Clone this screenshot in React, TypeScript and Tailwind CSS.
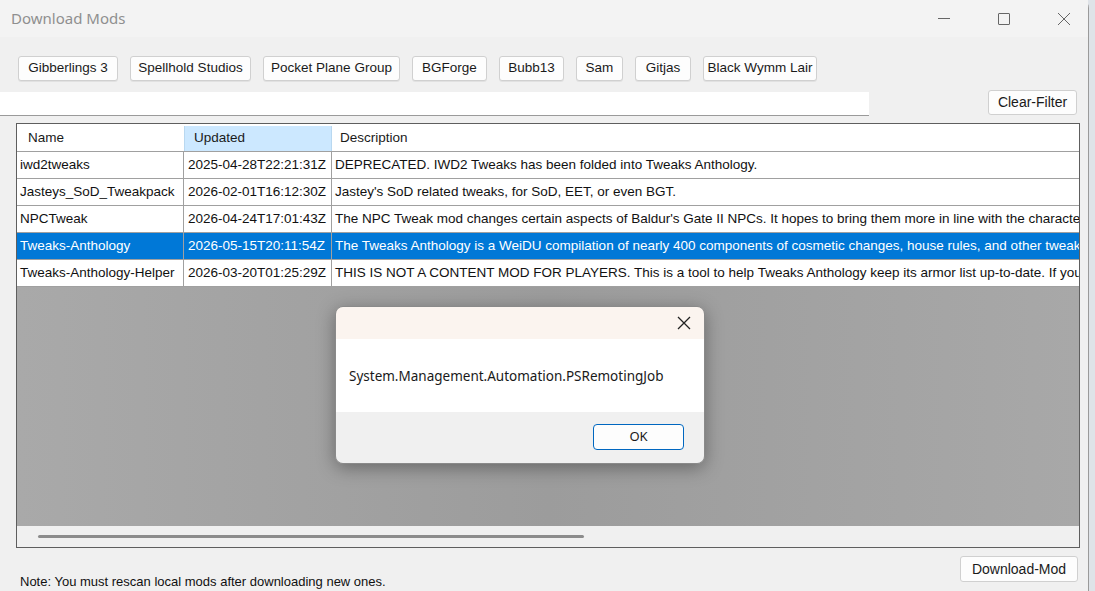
import React from "react";

const sources = [
  { label: "Gibberlings 3", w: "w-[100px]" },
  { label: "Spellhold Studios", w: "w-[121px]" },
  { label: "Pocket Plane Group", w: "w-[137px]" },
  { label: "BGForge", w: "w-[75px]" },
  { label: "Bubb13", w: "w-[65px]" },
  { label: "Sam", w: "w-[47px]" },
  { label: "Gitjas", w: "w-[56px]" },
  { label: "Black Wymm Lair", w: "w-[114px]" },
];

const rows = [
  ["iwd2tweaks", "2025-04-28T22:21:31Z", "DEPRECATED. IWD2 Tweaks has been folded into Tweaks Anthology."],
  ["Jasteys_SoD_Tweakpack", "2026-02-01T16:12:30Z", "Jastey's SoD related tweaks, for SoD, EET, or even BGT."],
  ["NPCTweak", "2026-04-24T17:01:43Z", "The NPC Tweak mod changes certain aspects of Baldur's Gate II NPCs. It hopes to bring them more in line with the character as they were presented in Baldur's Gate."],
  ["Tweaks-Anthology", "2026-05-15T20:11:54Z", "The Tweaks Anthology is a WeiDU compilation of nearly 400 components of cosmetic changes, house rules, and other tweaks for Infinity Engine games."],
  ["Tweaks-Anthology-Helper", "2026-03-20T01:25:29Z", "THIS IS NOT A CONTENT MOD FOR PLAYERS. This is a tool to help Tweaks Anthology keep its armor list up-to-date. If you are a modder"],
];

const ui = { fontFamily: '"Liberation Sans", Arial, sans-serif' };
const seg = { fontFamily: '"Noto Sans", "Open Sans", sans-serif' };

export default function App() {
  return (
    <div className="w-[1095px] h-[591px] bg-[#dfe3e8] overflow-hidden relative" style={ui}>
      <div className="w-[1089px] h-[591px] bg-[#f0f0f0] rounded-tr-[8px] border-r border-[#9a9a9a] flex flex-col relative">
        {/* Title bar */}
        <div className="h-[37px] bg-[#f3f3f3] flex items-center justify-between shrink-0">
          <span className="pl-[11px] text-[15px] text-[#8f8f8f]" style={seg}>Download Mods</span>
          <div className="flex items-center h-full">
            <div className="w-[60px] flex justify-center">
              <div className="w-[12px] h-px bg-[#666]" />
            </div>
            <div className="w-[60px] mr-[6px] flex justify-center">
              <div className="w-[12px] h-[12px] border border-[#666] rounded-[1px]" />
            </div>
            <div className="w-[48px] flex justify-center">
              <svg width="14" height="14" viewBox="0 0 14 14">
                <path d="M1 1L13 13M13 1L1 13" stroke="#666" strokeWidth="1" />
              </svg>
            </div>
          </div>
        </div>

        {/* Source buttons */}
        <div className="flex gap-[12px] pl-[18px] mt-[19px] shrink-0">
          {sources.map((s) => (
            <div
              key={s.label}
              className={`${s.w} h-[25px] shrink-0 whitespace-nowrap bg-[#fdfdfd] border border-[#d0d0d0] rounded-[3px] shadow-[0_1px_0_rgba(0,0,0,0.06)] flex items-center justify-center text-[13.5px] text-[#1a1a1a]`}
            >
              {s.label}
            </div>
          ))}
        </div>

        {/* Filter row */}
        <div className="flex items-start mt-[9px] shrink-0 h-[33px]">
          <div className="w-[869px] h-[24px] mt-[2px] bg-white border-b border-[#9a9a9a]" />
          <div className="ml-[119px] w-[89px] h-[25px] bg-[#fdfdfd] border border-[#d0d0d0] rounded-[3px] flex items-center justify-center text-[14px] text-[#1a1a1a]">
            Clear-Filter
          </div>
        </div>

        {/* List view */}
        <div className="ml-[16px] w-[1064px] h-[425px] border border-[#5e5e5e] bg-[#aaaaaa] flex flex-col shrink-0 overflow-hidden">
          <div className="bg-white h-[2px] shrink-0" />
          <div className="flex h-[25px] bg-white text-[13.5px] text-[#1a1a1a] shrink-0 pl-[1px]">
            <div className="w-[166px] pl-[10px] flex items-center">Name</div>
            <div className="w-[148px] pl-[9px] flex items-center bg-[#cce8ff] border-l border-r border-[#b9d8f0]">Updated</div>
            <div className="flex-1 pl-[8px] flex items-center">Description</div>
          </div>
          {rows.map((r, i) => {
            const sel = i === 3;
            return (
              <div
                key={r[0]}
                className={`flex h-[27px] text-[13.5px] shrink-0 border-t border-[#a0a0a0] ${sel ? "bg-[#0078d7] text-white" : "bg-white text-[#111]"}`}
              >
                <div className="w-[167px] pl-[3px] flex items-center whitespace-nowrap overflow-hidden border-r border-[#a0a0a0]">{r[0]}</div>
                <div className="w-[148px] pl-[4px] flex items-center whitespace-nowrap overflow-hidden border-r border-[#a0a0a0]">{r[1]}</div>
                <div className="flex-1 pl-[3px] flex items-center whitespace-nowrap overflow-hidden">{r[2]}</div>
              </div>
            );
          })}
          <div className="flex-1 border-t border-[#a0a0a0] bg-gradient-to-r from-[#a9a9a9] via-[#9c9c9c] to-[#a8a8a8]" />
          <div className="h-[21px] bg-[#f0f0f0] shrink-0 flex items-center pl-[21px]">
            <div className="w-[546px] h-[3px] rounded-full bg-[#8c8c8c]" />
          </div>
        </div>

        {/* Bottom */}
        <div className="flex justify-end pr-[10px] mt-[8px] shrink-0">
          <div className="w-[118px] h-[26px] bg-[#fdfdfd] border border-[#d0d0d0] rounded-[3px] flex items-center justify-center text-[14px] text-[#1a1a1a]">
            Download-Mod
          </div>
        </div>
        <div className="pl-[20px] -mt-[10px] text-[13px] text-[#111]">Note: You must rescan local mods after downloading new ones.</div>

        {/* Dialog */}
        <div className="absolute left-[335px] top-[306px] w-[370px] h-[158px] rounded-[8px] overflow-hidden shadow-[0_4px_18px_rgba(0,0,0,0.35)] border border-[#8a8a8a] flex flex-col" style={seg}>
          <div className="h-[32px] bg-[#fbf4ef] flex items-center justify-end pr-[13px] shrink-0">
            <svg width="14" height="14" viewBox="0 0 14 14">
              <path d="M1 1L13 13M13 1L1 13" stroke="#222" strokeWidth="1.3" />
            </svg>
          </div>
          <div className="h-[73px] bg-white flex items-center pl-[13px] pt-[2px] text-[13.5px] text-[#1a1a1a] shrink-0">
            System.Management.Automation.PSRemotingJob
          </div>
          <div className="flex-1 bg-[#f0f0f0] flex items-start justify-end pr-[20px] pt-[12px]">
            <div className="w-[91px] h-[26px] bg-[#fdfdfd] border border-[#0067c0] rounded-[4px] flex items-center justify-center text-[13px] text-[#1a1a1a]">
              OK
            </div>
          </div>
        </div>
      </div>
    </div>
  );
}
